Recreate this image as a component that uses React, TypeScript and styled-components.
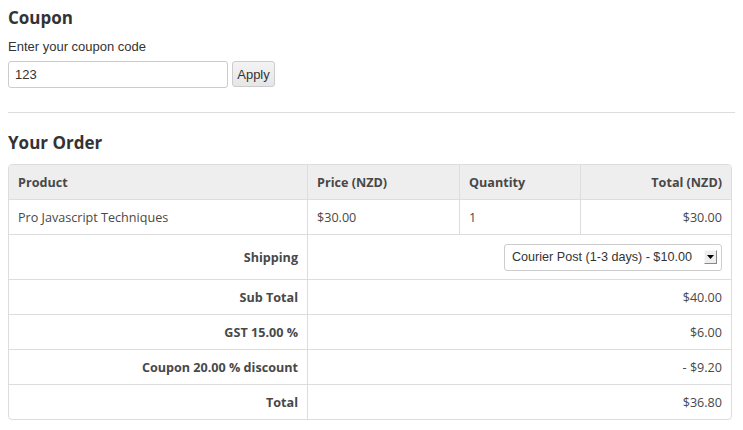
import React from 'react'
import styled, { createGlobalStyle } from 'styled-components'

const GlobalStyle = createGlobalStyle`
    html, body {
        margin: 0;
        padding: 0;
        background: #ffffff;
    }
    body {
        padding: 8px;
        font-family: 'Liberation Sans', Arial, sans-serif;
        color: #333333;
    }
`

const Page = styled.div`
    display: flex;
    flex-direction: column;
    width: 727px;
`

const Heading = styled.h2`
    margin: 0;
    font-family: 'Open Sans', 'Noto Sans', sans-serif;
    font-size: 17px;
    font-weight: 700;
    line-height: 20px;
    color: #333333;
`

const Label = styled.label`
    margin-top: 11px;
    font-size: 13px;
    line-height: 16px;
    color: #333333;
`

const CouponRow = styled.div`
    display: flex;
    align-items: flex-start;
    gap: 4px;
    margin-top: 6px;
`

const CodeInput = styled.input`
    box-sizing: border-box;
    width: 220px;
    height: 27px;
    padding: 0 6px;
    border: 1px solid #cccccc;
    border-radius: 3px;
    font-family: 'Liberation Sans', Arial, sans-serif;
    font-size: 13px;
    color: #333333;
    outline: none;
`

const ApplyButton = styled.button`
    box-sizing: border-box;
    width: 43px;
    height: 26px;
    padding: 0;
    border: 1px solid #cccccc;
    border-radius: 3px;
    background: linear-gradient(#f3f3f3, #e6e6e6);
    font-family: 'Liberation Sans', Arial, sans-serif;
    font-size: 13px;
    color: #333333;
`

const Rule = styled.hr`
    width: 100%;
    margin: 24px 0 20px;
    border: 0;
    border-top: 1px solid #dddddd;
`

const OrderTable = styled.table`
    margin-top: 11px;
    width: 724px;
    border-collapse: separate;
    border-spacing: 0;
    border: 1px solid #dddddd;
    border-radius: 4px;
    font-family: 'Open Sans', 'Noto Sans', sans-serif;
    font-size: 12.6px;
    color: #484848;
    table-layout: fixed;
`

const HeadCell = styled.th<{ $align?: string; $w: number }>`
    box-sizing: border-box;
    width: ${p => p.$w}px;
    height: 34px;
    padding: 0 9px;
    background: #eeeeee;
    text-align: ${p => p.$align || 'left'};
    font-weight: 700;
    border-left: 1px solid #dddddd;
    &:first-child {
        border-left: 0;
        border-top-left-radius: 4px;
    }
    &:last-child {
        border-top-right-radius: 4px;
    }
`

const Cell = styled.td<{ $align?: string; $bold?: boolean; $tall?: boolean }>`
    box-sizing: border-box;
    height: ${p => (p.$tall ? 45 : 35)}px;
    padding: 0 9px;
    text-align: ${p => p.$align || 'left'};
    font-weight: ${p => (p.$bold ? 700 : 400)};
    border-top: 1px solid #dddddd;
    border-left: 1px solid #dddddd;
    &:first-child {
        border-left: 0;
    }
`

const SelectWrap = styled.div`
    position: relative;
    display: inline-block;
    vertical-align: middle;
`

const ShippingSelect = styled.select`
    box-sizing: border-box;
    width: 218px;
    height: 27px;
    padding: 0 19px 0 7px;
    border: 1px solid #cccccc;
    border-radius: 3px;
    background: #ffffff;
    appearance: none;
    font-family: 'Liberation Sans', Arial, sans-serif;
    font-size: 12.6px;
    color: #333333;
    outline: none;
`

const ArrowBox = styled.span`
    position: absolute;
    right: 5px;
    top: 6px;
    box-sizing: border-box;
    width: 13px;
    height: 14px;
    background: #eeeeee;
    border-right: 1px solid #888888;
    border-bottom: 1px solid #888888;
    border-top: 1px solid #f8f8f8;
    border-left: 1px solid #f8f8f8;
    display: flex;
    align-items: center;
    justify-content: center;
    pointer-events: none;
`

const summary = [
    { label: 'Sub Total', value: '$40.00' },
    { label: 'GST 15.00 %', value: '$6.00' },
    { label: 'Coupon 20.00 % discount', value: '- $9.20' },
    { label: 'Total', value: '$36.80' },
]

const App = () => {
    return (
        <Page>
            <GlobalStyle />
            <Heading>Coupon</Heading>
            <Label htmlFor="coupon">Enter your coupon code</Label>
            <CouponRow>
                <CodeInput id="coupon" defaultValue="123" />
                <ApplyButton>Apply</ApplyButton>
            </CouponRow>
            <Rule />
            <Heading>Your Order</Heading>
            <OrderTable>
                <thead>
                    <tr>
                        <HeadCell $w={298}>Product</HeadCell>
                        <HeadCell $w={152}>Price (NZD)</HeadCell>
                        <HeadCell $w={121}>Quantity</HeadCell>
                        <HeadCell $w={151} $align="right">Total (NZD)</HeadCell>
                    </tr>
                </thead>
                <tbody>
                    <tr>
                        <Cell>Pro Javascript Techniques</Cell>
                        <Cell>$30.00</Cell>
                        <Cell>1</Cell>
                        <Cell $align="right">$30.00</Cell>
                    </tr>
                    <tr>
                        <Cell $align="right" $bold $tall>Shipping</Cell>
                        <Cell colSpan={3} $align="right" $tall>
                            <SelectWrap>
                                <ShippingSelect defaultValue="courier">
                                    <option value="courier">Courier Post (1-3 days) - $10.00</option>
                                </ShippingSelect>
                                <ArrowBox>
                                    <svg width="7" height="4" viewBox="0 0 7 4">
                                        <path d="M0 0 L7 0 L3.5 4 Z" fill="#000" />
                                    </svg>
                                </ArrowBox>
                            </SelectWrap>
                        </Cell>
                    </tr>
                    {summary.map(row => (
                        <tr key={row.label}>
                            <Cell $align="right" $bold>{row.label}</Cell>
                            <Cell colSpan={3} $align="right">{row.value}</Cell>
                        </tr>
                    ))}
                </tbody>
            </OrderTable>
        </Page>
    )
}

export default App
